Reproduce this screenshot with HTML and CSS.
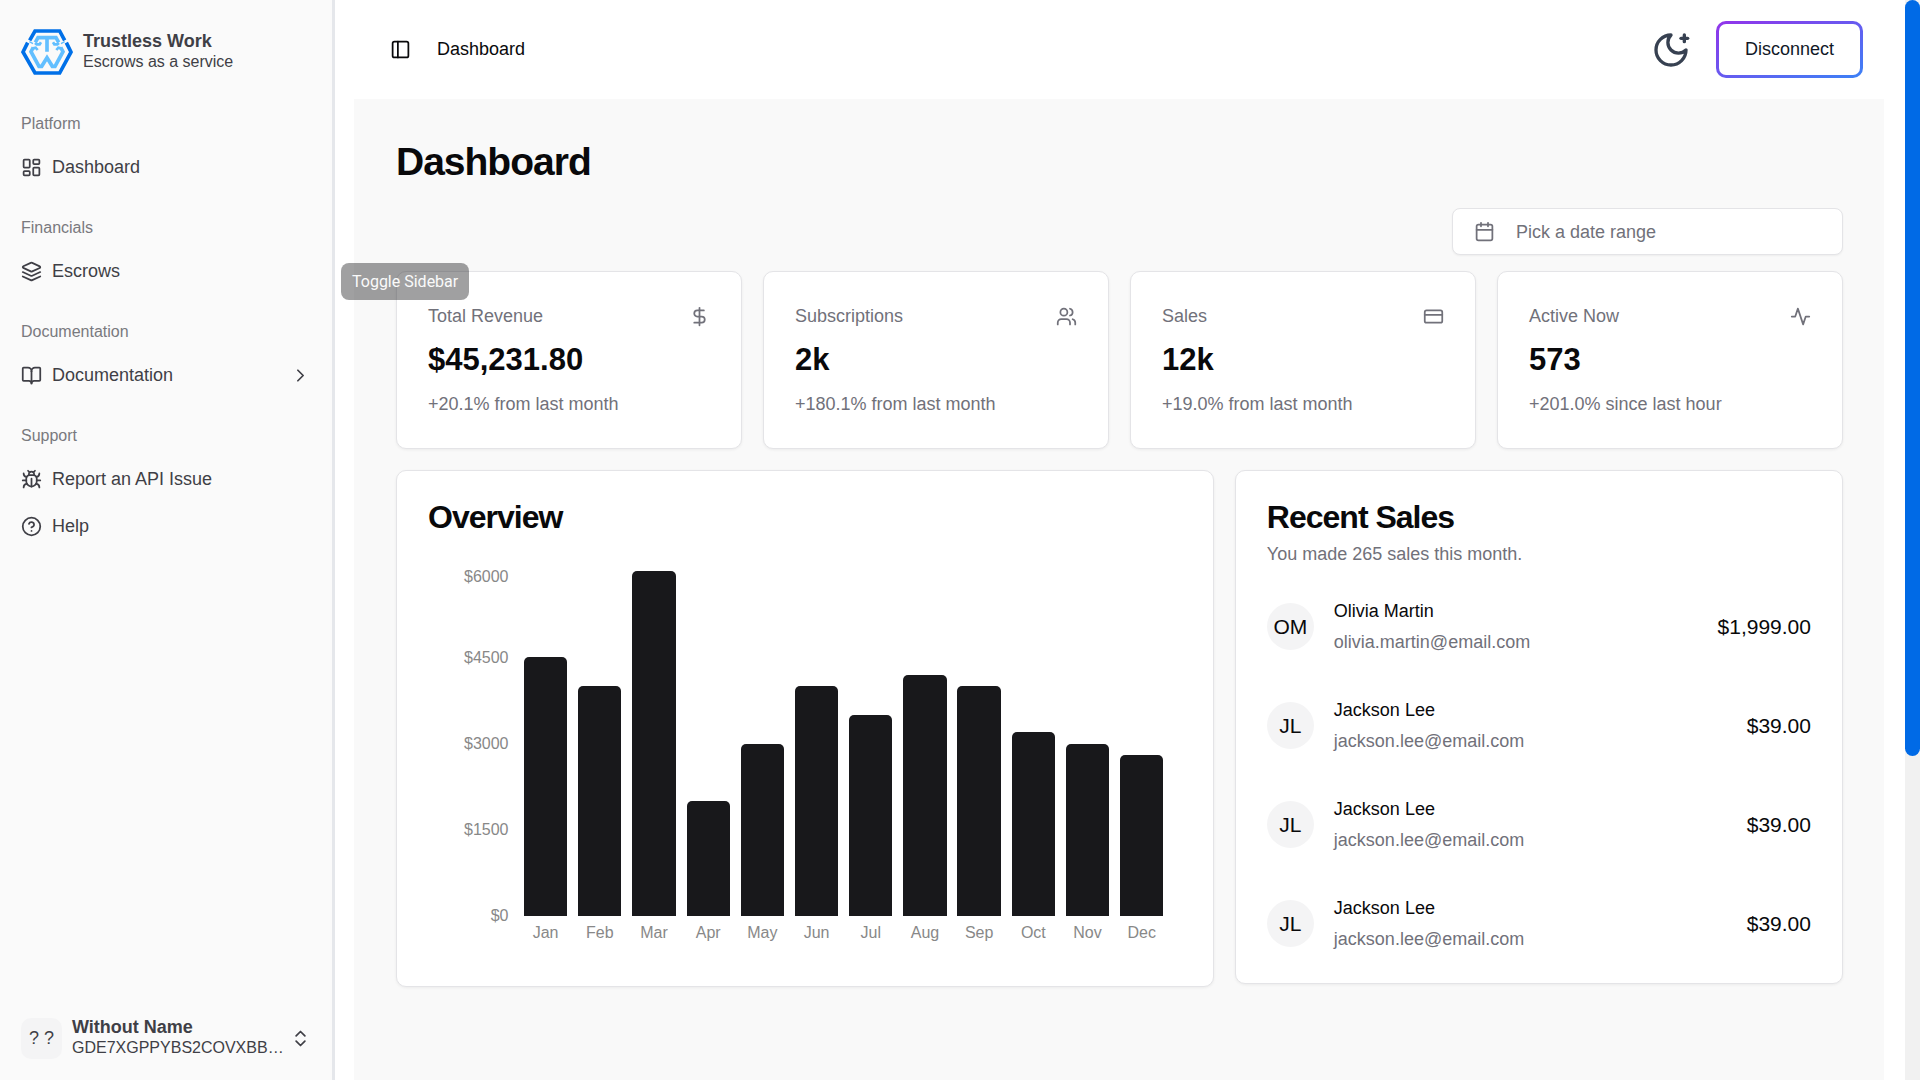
FILE: index.html
```html
<!DOCTYPE html>
<html lang="en">
<head>
<meta charset="utf-8">
<meta name="viewport" content="width=device-width, initial-scale=1">
<title>Dashboard - Trustless Work</title>
<link rel="stylesheet" href="styles.css">
</head>
<body>
<div class="app">
  <aside class="sidebar">
    <div class="brand">
      <svg class="brand-logo" viewBox="0 0 156 138" fill="none" aria-hidden="true">
        <g stroke="#0070e8" stroke-width="11">
          <path d="M26 34 42 6H116L131 34"/>
          <path d="M20 41 6 69 42 132H116L150 69 136 41"/>
        </g>
        <g stroke="#62bfff" stroke-width="11">
          <path d="M78 68V26M43 40 51 26H105L113 40"/>
          <path d="M42 42 47 46H56L60 40M114 42 109 46H100L96 40" stroke-width="8"/>
          <path d="M25 38 36 44M131 38 120 44" stroke-width="4"/>
          <path d="M50 63 44 56 36 58M106 63 112 56 120 58" stroke-width="8"/>
          <path d="M37 55 30 68 54 112H62L78 86 94 112H102L126 68 119 55"/>
        </g>
      </svg>
      <div class="stack">
        <strong class="name">Trustless Work</strong>
        <span class="caption">Escrows as a service</span>
      </div>
    </div>
    <nav class="nav">
      <section class="group">
        <h2 class="group-label">Platform</h2>
        <a class="item" href="#dashboard">
          <svg class="icon" viewBox="0 0 24 24"><rect width="7" height="9" x="3" y="3" rx="1"/><rect width="7" height="5" x="14" y="3" rx="1"/><rect width="7" height="9" x="14" y="12" rx="1"/><rect width="7" height="5" x="3" y="16" rx="1"/></svg>
          <span>Dashboard</span>
        </a>
      </section>
      <section class="group">
        <h2 class="group-label">Financials</h2>
        <a class="item" href="#escrows">
          <svg class="icon" viewBox="0 0 24 24"><path d="m12.83 2.18a2 2 0 0 0-1.66 0L2.6 6.08a1 1 0 0 0 0 1.83l8.58 3.91a2 2 0 0 0 1.66 0l8.58-3.9a1 1 0 0 0 0-1.83Z"/><path d="m22 17.65-9.17 4.16a2 2 0 0 1-1.66 0L2 17.65"/><path d="m22 12.65-9.17 4.16a2 2 0 0 1-1.66 0L2 12.65"/></svg>
          <span>Escrows</span>
        </a>
      </section>
      <section class="group">
        <h2 class="group-label">Documentation</h2>
        <button class="item" type="button">
          <svg class="icon" viewBox="0 0 24 24"><path d="M12 7v14"/><path d="M3 18a1 1 0 0 1-1-1V4a1 1 0 0 1 1-1h5a4 4 0 0 1 4 4 4 4 0 0 1 4-4h5a1 1 0 0 1 1 1v13a1 1 0 0 1-1 1h-6a3 3 0 0 0-3 3 3 3 0 0 0-3-3z"/></svg>
          <span class="grow">Documentation</span>
          <svg class="icon" viewBox="0 0 24 24"><path d="m9 18 6-6-6-6"/></svg>
        </button>
      </section>
      <section class="group">
        <h2 class="group-label">Support</h2>
        <a class="item" href="#report">
          <svg class="icon" viewBox="0 0 24 24"><path d="m8 2 1.88 1.88"/><path d="M14.12 3.88 16 2"/><path d="M9 7.13v-1a3.003 3.003 0 1 1 6 0v1"/><path d="M12 20c-3.3 0-6-2.7-6-6v-3a4 4 0 0 1 4-4h4a4 4 0 0 1 4 4v3c0 3.3-2.7 6-6 6"/><path d="M12 20v-9"/><path d="M6.53 9C4.6 8.8 3 7.1 3 5"/><path d="M6 13H2"/><path d="M3 21c0-2.1 1.7-3.9 3.8-4"/><path d="M20.97 5c0 2.1-1.6 3.8-3.5 4"/><path d="M22 13h-4"/><path d="M17.2 17c2.1.1 3.8 1.9 3.8 4"/></svg>
          <span>Report an API Issue</span>
        </a>
        <a class="item" href="#help">
          <svg class="icon" viewBox="0 0 24 24"><circle cx="12" cy="12" r="10"/><path d="M9.09 9a3 3 0 0 1 5.83 1c0 2-3 3-3 3"/><path d="M12 17h.01"/></svg>
          <span>Help</span>
        </a>
      </section>
    </nav>
    <button class="account" type="button">
      <span class="account-avatar">? ?</span>
      <span class="stack grow">
        <strong class="name">Without Name</strong>
        <span class="caption">GDE7XGPPYBS2COVXBB…</span>
      </span>
      <svg class="icon" viewBox="0 0 24 24"><path d="m7 15 5 5 5-5"/><path d="m7 9 5-5 5 5"/></svg>
    </button>
    <div class="tooltip" role="tooltip">Toggle Sidebar</div>
  </aside>

  <div class="page">
    <header class="topbar">
      <button class="icon-button" type="button" aria-label="Toggle Sidebar">
        <svg class="icon" viewBox="0 0 24 24"><rect width="18" height="18" x="3" y="3" rx="2"/><path d="M9 3v18"/></svg>
      </button>
      <span class="crumb grow">Dashboard</span>
      <button class="icon-button theme" type="button" aria-label="Dark theme">
        <svg class="icon icon-large" viewBox="0 0 24 24"><path d="M12 3a6.36 6.36 0 0 0 9 9 9 9 0 1 1-9-9Z"/><path d="M20 3v4"/><path d="M22 5h-4"/></svg>
      </button>
      <button class="disconnect" type="button">Disconnect</button>
    </header>

    <main class="content">
      <h1 class="title">Dashboard</h1>
      <button class="date-picker" type="button">
        <svg class="icon" viewBox="0 0 24 24"><path d="M8 2v4"/><path d="M16 2v4"/><rect width="18" height="18" x="3" y="4" rx="2"/><path d="M3 10h18"/></svg>
        <span>Pick a date range</span>
      </button>

      <div class="stats">
        <article class="card stat">
          <div class="stat-head"><h2 class="stat-label">Total Revenue</h2>
            <svg class="icon" viewBox="0 0 24 24"><path d="M12 2v20"/><path d="M17 5H9.5a3.5 3.5 0 0 0 0 7h5a3.5 3.5 0 0 1 0 7H6"/></svg></div>
          <p class="stat-value">$45,231.80</p>
          <p class="muted">+20.1% from last month</p>
        </article>
        <article class="card stat">
          <div class="stat-head"><h2 class="stat-label">Subscriptions</h2>
            <svg class="icon" viewBox="0 0 24 24"><path d="M16 21v-2a4 4 0 0 0-4-4H6a4 4 0 0 0-4 4v2"/><circle cx="9" cy="7" r="4"/><path d="M22 21v-2a4 4 0 0 0-3-3.87"/><path d="M16 3.13a4 4 0 0 1 0 7.75"/></svg></div>
          <p class="stat-value">2k</p>
          <p class="muted">+180.1% from last month</p>
        </article>
        <article class="card stat">
          <div class="stat-head"><h2 class="stat-label">Sales</h2>
            <svg class="icon" viewBox="0 0 24 24"><rect width="20" height="14" x="2" y="5" rx="2"/><path d="M2 10h20"/></svg></div>
          <p class="stat-value">12k</p>
          <p class="muted">+19.0% from last month</p>
        </article>
        <article class="card stat">
          <div class="stat-head"><h2 class="stat-label">Active Now</h2>
            <svg class="icon" viewBox="0 0 24 24"><path d="M22 12h-4l-3 9L9 3l-3 9H2"/></svg></div>
          <p class="stat-value">573</p>
          <p class="muted">+201.0% since last hour</p>
        </article>
      </div>

      <div class="panels">
        <section class="card overview">
          <h2 class="card-title">Overview</h2>
          <div class="chart">
            <div class="axis">
              <span class="axis-max">$6000</span><span>$4500</span><span>$3000</span><span>$1500</span><span>$0</span>
            </div>
            <div class="bars">
              <div class="month"><div class="track"><div class="bar" style="height:75%"></div></div><span>Jan</span></div>
              <div class="month"><div class="track"><div class="bar" style="height:66.67%"></div></div><span>Feb</span></div>
              <div class="month"><div class="track"><div class="bar" style="height:100%"></div></div><span>Mar</span></div>
              <div class="month"><div class="track"><div class="bar" style="height:33.33%"></div></div><span>Apr</span></div>
              <div class="month"><div class="track"><div class="bar" style="height:50%"></div></div><span>May</span></div>
              <div class="month"><div class="track"><div class="bar" style="height:66.67%"></div></div><span>Jun</span></div>
              <div class="month"><div class="track"><div class="bar" style="height:58.33%"></div></div><span>Jul</span></div>
              <div class="month"><div class="track"><div class="bar" style="height:70%"></div></div><span>Aug</span></div>
              <div class="month"><div class="track"><div class="bar" style="height:66.67%"></div></div><span>Sep</span></div>
              <div class="month"><div class="track"><div class="bar" style="height:53.33%"></div></div><span>Oct</span></div>
              <div class="month"><div class="track"><div class="bar" style="height:50%"></div></div><span>Nov</span></div>
              <div class="month"><div class="track"><div class="bar" style="height:46.67%"></div></div><span>Dec</span></div>
            </div>
          </div>
        </section>

        <section class="card recent">
          <h2 class="card-title">Recent Sales</h2>
          <p class="muted recent-note">You made 265 sales this month.</p>
          <ul class="sales">
            <li class="sale"><span class="avatar">OM</span><div class="buyer"><p>Olivia Martin</p><p class="muted">olivia.martin@email.com</p></div><span class="amount">$1,999.00</span></li>
            <li class="sale"><span class="avatar">JL</span><div class="buyer"><p>Jackson Lee</p><p class="muted">jackson.lee@email.com</p></div><span class="amount">$39.00</span></li>
            <li class="sale"><span class="avatar">JL</span><div class="buyer"><p>Jackson Lee</p><p class="muted">jackson.lee@email.com</p></div><span class="amount">$39.00</span></li>
            <li class="sale"><span class="avatar">JL</span><div class="buyer"><p>Jackson Lee</p><p class="muted">jackson.lee@email.com</p></div><span class="amount">$39.00</span></li>
          </ul>
        </section>
      </div>
    </main>
  </div>
  <div class="scrollbar" aria-hidden="true"><div class="scroll-thumb"></div></div>
</div>
</body>
</html>
```
FILE: styles.css
```css
* { box-sizing: border-box; margin: 0; padding: 0; }

body {
  font: 18px/26px "Liberation Sans", Arial, sans-serif;
  color: #09090b;
  background: #fff;
}

button { font: inherit; color: inherit; background: none; border: 0; text-align: left; cursor: pointer; }
a { color: inherit; text-decoration: none; }
ul { list-style: none; }

.icon {
  width: 21px;
  height: 21px;
  flex: none;
  fill: none;
  stroke: currentColor;
  stroke-width: 2;
  stroke-linecap: round;
  stroke-linejoin: round;
}
.icon-large { width: 40px; height: 40px; }
.grow { flex: 1; min-width: 0; }
.muted { color: #71717a; }

.app { display: flex; height: 100vh; overflow: hidden; }

/* Sidebar */
.sidebar {
  position: relative;
  z-index: 1;
  flex: none;
  width: 335px;
  display: flex;
  flex-direction: column;
  background: #fafafa;
  border-right: 3px solid #e5e7eb;
  color: #3f3f46;
}
.brand { display: flex; align-items: center; gap: 10px; height: 93px; padding: 11px 21px 0; }
.brand-logo { width: 52px; height: 46px; }
.stack { display: flex; flex-direction: column; padding-bottom: 2px; }
.name { line-height: 22px; }
.caption { font-size: 16px; line-height: 20px; white-space: nowrap; }
.nav { flex: 1; }
.group { padding: 10px 10px 9px; }
.group-label {
  margin-bottom: 1px;
  padding: 0 11px;
  font-size: 16px;
  font-weight: 400;
  line-height: 42px;
  color: #79797e;
}
.item {
  display: flex;
  align-items: center;
  gap: 10px;
  width: 100%;
  height: 42px;
  padding: 0 11px;
}
.item + .item { margin-top: 5px; }
.account { display: flex; align-items: center; gap: 10px; padding: 0 21px; margin-bottom: 20px; }
.account-avatar {
  width: 41px;
  line-height: 41px;
  border-radius: 10px;
  background: #f4f4f5;
  text-align: center;
}
.tooltip {
  position: absolute;
  top: 263px;
  left: 341px;
  padding: 0 11px;
  border-radius: 8px;
  background: rgba(24, 24, 27, 0.41);
  color: #fafafa;
  font: 400 16px/37px Roboto, sans-serif;
  white-space: nowrap;
}

/* Top bar */
.page { flex: 1; min-width: 0; display: flex; flex-direction: column; padding: 0 21px 0 19px; }
.topbar { flex: none; display: flex; align-items: center; height: 99px; padding: 0 21px 0 36px; }
.icon-button { display: flex; }
.crumb { padding: 0 0 2px 26px; }
.theme { color: #374151; margin-right: 25px; }
.disconnect {
  height: 57px;
  padding: 0 26px 2px;
  border: 3px solid transparent;
  border-radius: 10px;
  background: linear-gradient(#fff, #fff) padding-box, linear-gradient(to bottom right, #9333ea, #3b82f6) border-box;
  color: #111827;
}

/* Content */
.content { flex: 1; display: flex; flex-direction: column; padding: 41px 41px 41px 42px; background: #f9f9f9; }
.title { font-size: 39px; line-height: 43px; letter-spacing: -1px; }
.date-picker {
  display: flex;
  align-items: center;
  align-self: flex-end;
  gap: 21px;
  width: 391px;
  height: 47px;
  margin: 25px 0 16px;
  padding: 0 21px;
  border: 1px solid #e4e4e7;
  border-radius: 8px;
  background: #fff;
  box-shadow: 0 1px 2px rgba(0, 0, 0, 0.05);
  color: #71717a;
}
.card {
  padding: 31px;
  border: 1px solid #e4e4e7;
  border-radius: 10px;
  background: #fff;
  box-shadow: 0 1px 3px rgba(0, 0, 0, 0.06);
}
.card-title { font-size: 32px; line-height: 31px; letter-spacing: -1px; }

.stats { display: grid; grid-template-columns: repeat(4, 1fr); gap: 21px; }
.stat { display: flex; flex-direction: column; gap: 10px; }
.stat-head { display: flex; align-items: center; justify-content: space-between; color: #71717a; }
.stat-label { font-size: 18px; font-weight: 400; }
.stat-value { font-size: 31px; font-weight: 700; line-height: 42px; }

.panels { display: grid; grid-template-columns: repeat(7, 1fr); align-items: start; gap: 21px; margin-top: 21px; }
.overview { grid-column: span 4; }
.recent { grid-column: span 3; }

/* Bar chart */
.chart {
  display: flex;
  gap: 10px;
  padding: 38px 13px 13px 36px;
  color: #888;
  font-size: 16px;
  line-height: 18px;
}
.axis { display: grid; grid-template-rows: repeat(4, 86px) 18px; margin-top: -8px; text-align: right; }
.axis-max { padding-top: 5px; }
.bars { flex: 1; display: grid; grid-template-columns: repeat(12, 1fr); }
.month { display: flex; flex-direction: column; gap: 8px; text-align: center; }
.track { display: flex; align-items: flex-end; justify-content: center; height: 345px; }
.bar { width: 80%; border-radius: 5px 5px 0 0; background: #18181b; }

/* Recent sales */
.recent-note { margin-top: 8px; }
.sales { display: flex; flex-direction: column; gap: 42px; margin-top: 31px; }
.sale { display: flex; align-items: center; gap: 20px; }
.avatar {
  width: 47px;
  line-height: 47px;
  border-radius: 50%;
  background: #f4f4f5;
  font-size: 21px;
  text-align: center;
}
.buyer { flex: 1; display: flex; flex-direction: column; gap: 5px; }
.amount { font-size: 21px; }

/* Scroll track */
.scrollbar { flex: none; width: 15px; background: #f1f1f1; }
.scroll-thumb { height: 70%; border-radius: 8px; background: #006ae6; }
```
